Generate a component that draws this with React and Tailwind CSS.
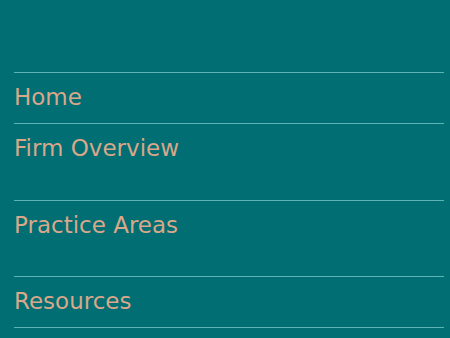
import React from "react";

const items = [
  { label: "Home", extra: false },
  { label: "Firm Overview", extra: true },
  { label: "Practice Areas", extra: true },
  { label: "Resources", extra: false },
];

const App = () => {
  return (
    <div
      className="min-h-[338px] bg-[#006e73] pt-[72px] pl-[14px] pr-[6px]"
      style={{ fontFamily: "'DejaVu Sans', sans-serif" }}
    >
      <ul className="border-b border-[#5cb3b6]">
        {items.map((item) => (
          <li key={item.label} className="border-t border-[#5cb3b6]">
            <a className="block pt-[7px] pb-[9px] text-[23px] leading-[34px] text-[#d9a78a]">
              {item.label}
            </a>
            {/* submenu space */}
            {item.extra && <div className="h-[25.5px]"></div>}
          </li>
        ))}
      </ul>
    </div>
  );
};

export default App;
